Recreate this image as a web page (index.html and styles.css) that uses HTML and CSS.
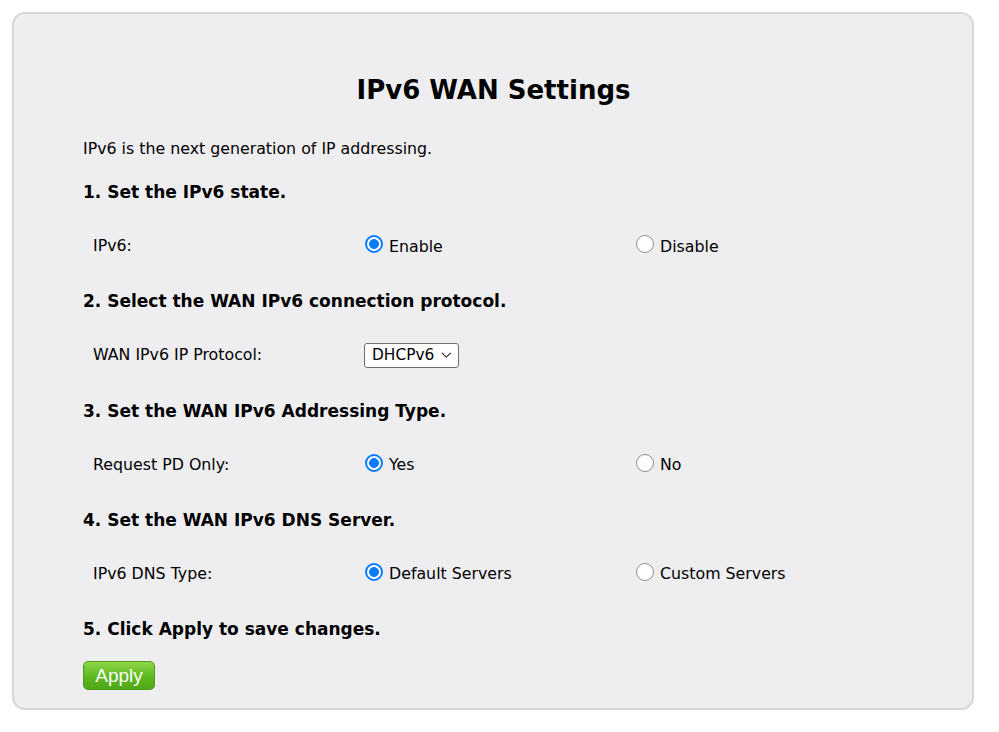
FILE: index.html
```html
<!DOCTYPE html>
<html>
<head>
<meta charset="utf-8">
<link rel="stylesheet" href="styles.css">
</head>
<body>
<div class="panel">
  <h1 class="title">IPv6 WAN Settings</h1>
  <p class="intro">IPv6 is the next generation of IP addressing.</p>

  <h2 class="step">1. Set the IPv6 state.</h2>
  <div class="row">
    <span class="label">IPv6:</span>
    <label class="opt"><input type="radio" name="st" checked><span>Enable</span></label>
    <label class="opt"><input type="radio" name="st"><span>Disable</span></label>
  </div>

  <h2 class="step">2. Select the WAN IPv6 connection protocol.</h2>
  <div class="row">
    <span class="label">WAN IPv6 IP Protocol:</span>
    <div class="select">
      <span>DHCPv6</span>
      <svg width="12" height="8" viewBox="0 0 12 8"><path d="M1 1.5 L6 6.3 L11 1.5" fill="none" stroke="#222" stroke-width="1.2"/></svg>
    </div>
  </div>

  <h2 class="step">3. Set the WAN IPv6 Addressing Type.</h2>
  <div class="row">
    <span class="label">Request PD Only:</span>
    <label class="opt"><input type="radio" name="pd" checked><span>Yes</span></label>
    <label class="opt"><input type="radio" name="pd"><span>No</span></label>
  </div>

  <h2 class="step">4. Set the WAN IPv6 DNS Server.</h2>
  <div class="row">
    <span class="label">IPv6 DNS Type:</span>
    <label class="opt"><input type="radio" name="dns" checked><span>Default Servers</span></label>
    <label class="opt"><input type="radio" name="dns"><span>Custom Servers</span></label>
  </div>

  <h2 class="step">5. Click Apply to save changes.</h2>
  <div class="actions">
    <button class="apply">Apply</button>
  </div>
</div>
</body>
</html>
```

FILE: styles.css
```css
html, body {
  margin: 0;
  padding: 0;
  background: #ffffff;
}
body {
  font-family: "DejaVu Sans", Verdana, sans-serif;
  color: #000;
}
.panel {
  box-sizing: border-box;
  margin: 12px 0 0 12px;
  width: 962px;
  height: 698px;
  background: #eeeef0;
  border: 2px solid #d6d6d8;
  border-radius: 13px;
  padding: 58px 68px 0 69px;
}
.title {
  margin: 0;
  text-align: center;
  font-size: 26px;
  font-weight: bold;
  line-height: 36px;
}
.intro {
  margin: 31px 0 0 0;
  font-size: 15.8px;
  line-height: 20px;
}
.step {
  margin: 0;
  font-size: 17px;
  font-weight: bold;
  line-height: 22px;
  height: 22px;
}
.intro + .step { margin-top: 22px; }
.row {
  display: grid;
  grid-template-columns: 272px 271px 1fr;
  align-items: center;
  height: 33px;
  margin: 26.5px 0 27.8px 10px;
  font-size: 15.8px;
}
.label { line-height: 20px; }
.opt {
  display: flex;
  align-items: center;
  gap: 6px;
}
.opt input {
  appearance: none;
  -webkit-appearance: none;
  margin: 0;
  width: 18px;
  height: 18px;
  border-radius: 50%;
  border: 1px solid #8e8e93;
  background: #fff;
  box-sizing: border-box;
  position: relative;
  top: -2px;
}
.opt input:checked {
  border: 2px solid #0a7aff;
  background: radial-gradient(circle, #0a7aff 0 4.6px, #fff 5.2px);
}
.select {
  display: inline-flex;
  align-items: center;
  gap: 7px;
  box-sizing: border-box;
  width: 95px;
  height: 25px;
  padding: 0 6px 0 7px;
  background: #fff;
  border: 1px solid #6f6f6f;
  border-radius: 3px;
  font-size: 15.4px;
  margin-left: -1px;
}
.actions {
  margin-top: 21px;
}
.apply {
  width: 72px;
  height: 29px;
  border: 1px solid #4e9a14;
  border-radius: 5px;
  background: linear-gradient(#8fd64a, #5cb820 55%, #4fa817);
  color: #fff;
  font-family: "Liberation Sans", Arial, sans-serif;
  font-size: 19px;
  padding: 0;
}
```
